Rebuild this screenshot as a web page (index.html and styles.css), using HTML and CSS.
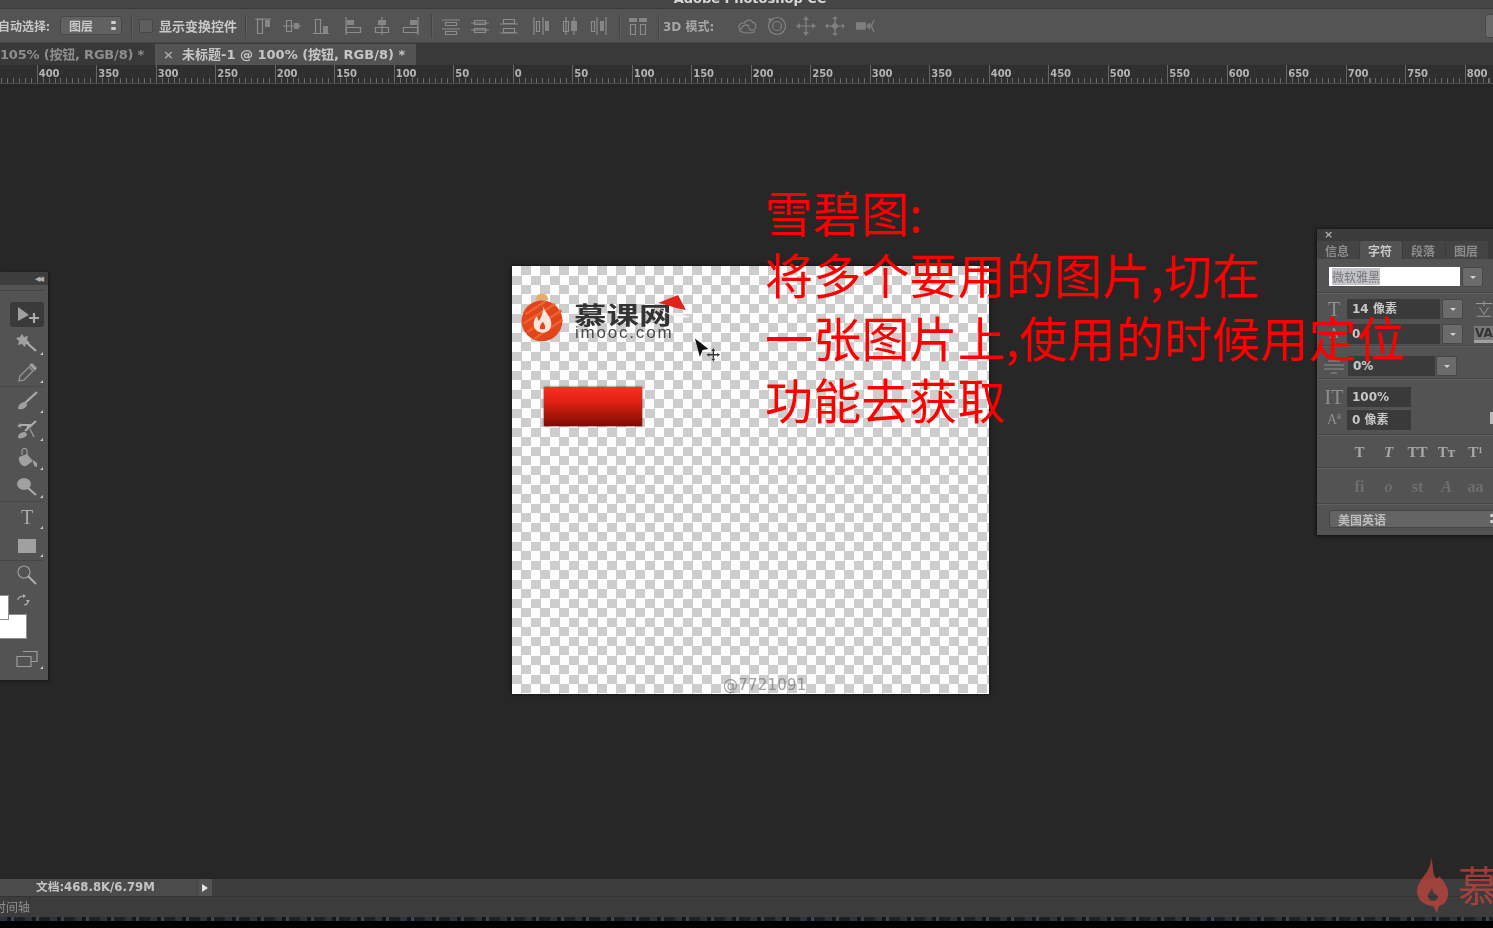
FILE: index.html
```html
<!DOCTYPE html>
<html lang="zh-CN">
<head>
    <meta charset="UTF-8">
    <title>Adobe Photoshop CC</title>
    <link rel="stylesheet" href="styles.css">
</head>
<body>
    <svg class="defs" width="0" height="0">
        <symbol id="al1" viewBox="0 0 20 20"><path d="M2 3h16M4.500 3.500h5v14h-5z"/><path class="f" d="M12 4h5v7h-5z"/></symbol>
        <symbol id="al2" viewBox="0 0 20 20"><path d="M1 10h18M4.500 4.500h5v11h-5z"/><path class="f" d="M12 7h5v6h-5z"/></symbol>
        <symbol id="al3" viewBox="0 0 20 20"><path d="M2 17.500h16M4.500 3.500h5v14h-5z"/><path class="f" d="M12 10h5v7h-5z"/></symbol>
        <symbol id="al4" viewBox="0 0 20 20"><path d="M3 1v18M3.500 11.500h14v5h-14z"/><path class="f" d="M4 4h7v5H4z"/></symbol>
        <symbol id="al5" viewBox="0 0 20 20"><path d="M10 1v18M3.500 11.500h13v5h-13z"/><path class="f" d="M6 4h8v5H6z"/></symbol>
        <symbol id="al6" viewBox="0 0 20 20"><path d="M17 1v18M2.500 11.500h14v5h-14z"/><path class="f" d="M9 4h7v5H9z"/></symbol>
        <symbol id="ds1" viewBox="0 0 20 20"><path d="M1 4h18M1 13h18M4.500 6.500h11v3h-11zM4.500 15.500h11v3h-11z"/></symbol>
        <symbol id="ds2" viewBox="0 0 20 20"><path d="M1 7h18M1 14h18M4.500 4.500h11v4h-11zM4.500 12.500h11v4h-11z"/></symbol>
        <symbol id="ds3" viewBox="0 0 20 20"><path d="M1 8h18M1 17h18M4.500 3.500h11v4h-11zM4.500 12.500h11v4h-11z"/></symbol>
        <symbol id="ds4" viewBox="0 0 20 20"><path d="M3 1v18M12 1v18M5.500 5.500h3v10h-3z"/><path class="f" d="M14 5h4v10h-4z"/></symbol>
        <symbol id="ds5" viewBox="0 0 20 20"><path d="M6 1v18M14 1v18M3.500 5.500h5v10h-5z"/><path class="f" d="M11 5h6v10h-6z"/></symbol>
        <symbol id="ds6" viewBox="0 0 20 20"><path d="M8 1v18M17 1v18M2.500 5.500h3v10h-3z"/><path class="f" d="M11 5h4v10h-4z"/></symbol>
        <symbol id="auto" viewBox="0 0 20 20"><path class="f" d="M1 2h8v4H1zM11 2h8v4h-8z"/><path d="M2.500 8.500h5v10h-5zM12.500 8.500h5v10h-5z"/></symbol>
        <symbol id="orbit" viewBox="0 0 22 20"><path d="M3 13c-3-4 2-7 5-6 1-4 8-5 9-1 4 0 5 6 2 8-3 2-6 0-6-3s-5-3-7 0c-1 2-2 3-3 2zM2 14c3 4 12 5 18 2"/></symbol>
        <symbol id="roll" viewBox="0 0 20 20"><circle cx="10" cy="10" r="8.500"/><circle cx="10" cy="10" r="4.500"/><path class="f" d="M1 2l6 1-4 4z"/></symbol>
        <symbol id="pan" viewBox="0 0 20 20"><path d="M10 2v16M2 10h16"/><path class="f" d="M10 0l3 4H7zM10 20l3-4H7zM0 10l4-3v6zM20 10l-4-3v6z"/></symbol>
        <symbol id="slide" viewBox="0 0 20 20"><path d="M1 10h18M10 3v14"/><path class="f" d="M10 6l4 4-4 4-4-4zM10 0l3 3H7zM10 20l3-3H7zM0 10l3-3v6zM20 10l-3-3v6z"/></symbol>
        <symbol id="cam" viewBox="0 0 22 20"><path class="f" d="M1 6h11v8H1zM13 9l4-3v8l-4-3z"/><path d="M21 3l-3 7 3 7"/></symbol>
    </svg>

    <div class="app">
        <div class="titlebar"><span>Adobe Photoshop CC</span></div>

        <div class="options">
            <span class="opt-label">自动选择:</span>
            <span class="opt-select">图层<i class="updown"></i></span>
            <span class="opt-sep s1"></span>
            <span class="opt-check"></span>
            <span class="opt-text">显示变换控件</span>
            <span class="opt-sep s2"></span>
            <div class="opt-icons first">
                <svg class="ico"><use href="#al1"/></svg>
                <svg class="ico"><use href="#al2"/></svg>
                <svg class="ico"><use href="#al3"/></svg>
            </div>
            <div class="opt-icons gap12">
                <svg class="ico"><use href="#al4"/></svg>
                <svg class="ico"><use href="#al5"/></svg>
                <svg class="ico"><use href="#al6"/></svg>
            </div>
            <span class="opt-sep s3"></span>
            <div class="opt-icons gap10">
                <svg class="ico"><use href="#ds1"/></svg>
                <svg class="ico"><use href="#ds2"/></svg>
                <svg class="ico"><use href="#ds3"/></svg>
            </div>
            <div class="opt-icons gap12">
                <svg class="ico"><use href="#ds4"/></svg>
                <svg class="ico"><use href="#ds5"/></svg>
                <svg class="ico"><use href="#ds6"/></svg>
            </div>
            <span class="opt-sep s3"></span>
            <div class="opt-icons gap9">
                <svg class="ico"><use href="#auto"/></svg>
            </div>
            <span class="opt-sep s4"></span>
            <span class="opt-3d">3D 模式:</span>
            <div class="opt-icons gap12 dim">
                <svg class="ico"><use href="#orbit"/></svg>
                <svg class="ico gap2"><use href="#roll"/></svg>
                <svg class="ico"><use href="#pan"/></svg>
                <svg class="ico"><use href="#slide"/></svg>
                <svg class="ico gap2"><use href="#cam"/></svg>
            </div>
            <span class="opt-end"></span>
        </div>

        <div class="tabs">
            <div class="tab">105% (按钮, RGB/8) *</div>
            <div class="tab active"><span class="close">×</span>未标题-1 @ 100% (按钮, RGB/8) *</div>
        </div>

        <div class="ruler">
            <div class="mark">400</div><div class="mark">350</div><div class="mark">300</div>
            <div class="mark">250</div><div class="mark">200</div><div class="mark">150</div>
            <div class="mark">100</div><div class="mark">50</div><div class="mark">0</div>
            <div class="mark">50</div><div class="mark">100</div><div class="mark">150</div>
            <div class="mark">200</div><div class="mark">250</div><div class="mark">300</div>
            <div class="mark">350</div><div class="mark">400</div><div class="mark">450</div>
            <div class="mark">500</div><div class="mark">550</div><div class="mark">600</div>
            <div class="mark">650</div><div class="mark">700</div><div class="mark">750</div>
            <div class="mark">800</div>
        </div>

        <main class="workspace">
            <!-- the open document -->
            <div class="doc">
                <svg class="ball" viewBox="0 0 48 56">
                    <path d="M17 9c1-5 3-7 7-7s6 2 7 7z" fill="#e0b06a"/>
                    <circle cx="24" cy="31" r="22" fill="#e2451c"/>
                    <path d="M6 24l22-14M4 34L38 13M8 43L45 20M16 50l30-20" stroke="#ee6430" stroke-width="2.500"/>
                    <path d="M25 15c2 7 9 11 9 19 0 6-4 10-9 10-6 0-10-4-10-10 0-4 2-7 4-8 0 3 1 4 2 5 2-5 5-9 4-16z" fill="#fbe6dc"/>
                    <path d="M25 32c2 3 3 5 2 8h-5c-1-3 1-6 3-8z" fill="#e2451c"/>
                </svg>
                <span class="brand">慕课网</span>
                <span class="brand-sub">imooc.com</span>
                <svg class="hat" viewBox="0 0 36 26">
                    <path d="M2 16l10 5 13 1 10 3-9 1C17 24 8 21 2 16z" fill="#f4f4f4"/>
                    <path d="M2 11L22 3l8 15-10-2C14 14 8 12 2 11z" fill="#e3241b"/>
                </svg>
                <div class="red-bar"></div>
                <svg class="pointer" viewBox="0 0 28 26">
                    <path d="M1 1l14 11-6 1-3 7z" fill="#111"/>
                    <path d="M20 14v8M16 18h8" stroke="#333" stroke-width="1.500"/>
                    <path d="M20 11l2 3h-4zM20 25l2-3h-4zM13 18l3-2v4zM27 18l-3-2v4z" fill="#333"/>
                </svg>
                <span class="watermark">@7721091</span>
            </div>

            <!-- tool strip -->
            <aside class="tools">
                <div class="tools-head">◂◂</div>
                <div class="tools-grip"></div>
                <div class="tool on">
                    <svg viewBox="0 0 26 20"><path class="f" d="M4 2l11 8-11 6z"/><path class="w" d="M20 8v10M15 13h10"/></svg>
                </div>
                <div class="tool mark-c">
                    <svg viewBox="0 0 26 20"><path class="f" d="M8 1l2 3 4-1-1 4 3 3-4 1-1 3-3-3-4 1 1-4-3-3 4-1z"/><path class="w" d="M12 9l10 9"/></svg>
                </div>
                <div class="tool mark-c">
                    <svg viewBox="0 0 26 20"><path d="M5 19l1-5 9-9 4 4-9 9z"/><path class="f" d="M15 3l3-2 5 5-2 3z"/></svg>
                </div>
                <div class="tool-line"></div>
                <div class="tool mark-c">
                    <svg viewBox="0 0 26 20"><path class="w" d="M11 12L23 1"/><path class="f" d="M4 18c0-4 3-7 7-7l2 2c0 4-5 6-9 5z"/></svg>
                </div>
                <div class="tool mark-c">
                    <svg viewBox="0 0 26 20"><path class="w" d="M11 11L22 1M5 5h11l-3 3"/><path class="f" d="M4 18c0-4 3-6 7-6l2 2c0 3-5 5-9 4zM3 6l4-3v5z"/><path d="M16 9l4 8"/></svg>
                </div>
                <div class="tool mark-c">
                    <svg viewBox="0 0 26 20"><path class="f" d="M5 9l8-3 6 7-7 5c-4 1-8-4-7-9z"/><path d="M8 7V3a2.500 2.500 0 0 1 5 0v5"/><path class="f" d="M19 12l4 3v4c-3 0-4-3-4-7z"/></svg>
                </div>
                <div class="tool mark-c">
                    <svg viewBox="0 0 26 20"><ellipse class="f" cx="10" cy="7" rx="7" ry="6"/><path class="w" d="M14 11l8 7"/></svg>
                </div>
                <div class="tool-line"></div>
                <div class="tool mark-c tall">
                    <span class="tool-t">T</span>
                </div>
                <div class="tool mark-c">
                    <svg viewBox="0 0 26 20"><rect class="f" x="4" y="3" width="18" height="14"/></svg>
                </div>
                <div class="tool-line"></div>
                <div class="tool">
                    <svg viewBox="0 0 26 20"><circle cx="10" cy="7" r="6"/><path class="w" d="M14 11l8 8"/></svg>
                </div>
                <div class="colors">
                    <svg class="swap" viewBox="0 0 14 12"><path d="M2 6c0-3 3-4 6-4M8 11c3 0 4-2 4-5"/><path class="f" d="M7 0l3 2-3 2zM10 6h4l-2 3z"/></svg>
                    <div class="swatch bg"></div>
                    <div class="swatch fg"></div>
                </div>
                <div class="tool mark-c">
                    <svg viewBox="0 0 26 20"><path d="M3 8.500h14v10H3zM9 3.500h14v10H17"/></svg>
                </div>
            </aside>

            <!-- character panel -->
            <aside class="panel">
                <div class="panel-head">×</div>
                <div class="panel-tabs">
                    <span class="ptab">信息</span>
                    <span class="ptab on">字符</span>
                    <span class="ptab">段落</span>
                    <span class="ptab">图层</span>
                </div>
                <div class="p-section font-row">
                    <div class="font-input"><span>微软雅黑</span></div>
                    <span class="drop"></span>
                </div>
                <div class="p-section size-rows">
                    <div class="p-row">
                        <span class="p-ico">T</span>
                        <span class="field w-93">14 像素</span>
                        <span class="drop"></span>
                        <svg class="p-side" viewBox="0 0 22 20"><path d="M2 4h18M11 1v6M6 8l5 8 5-8M3 18h16"/></svg>
                    </div>
                    <div class="p-row">
                        <span class="p-ico small">A</span>
                        <span class="field w-93">0</span>
                        <span class="drop"></span>
                        <span class="p-va">VA</span>
                    </div>
                </div>
                <div class="p-section pct-row">
                    <div class="p-row">
                        <svg class="p-small" viewBox="0 0 22 18"><path d="M1 8h20M1 12h20M5 4h12M8 16h6"/></svg>
                        <span class="field w-87">0%</span>
                        <span class="drop"></span>
                    </div>
                </div>
                <div class="p-section scale-rows">
                    <div class="p-row">
                        <span class="p-ico">IT</span>
                        <span class="field w-64">100%</span>
                    </div>
                    <div class="p-row">
                        <span class="p-ico small">Aª</span>
                        <span class="field w-64">0 像素</span>
                        <span class="p-tail"></span>
                    </div>
                </div>
                <div class="p-section style-row">
                    <span>T</span><span class="it">T</span><span>TT</span><span>Tт</span><span>T¹</span>
                </div>
                <div class="p-section liga-row">
                    <span>fi</span><span class="it">o</span><span>st</span><span class="it">A</span><span>aa</span>
                </div>
                <div class="p-section lang-row">
                    <div class="lang">美国英语<i class="updown"></i></div>
                </div>
            </aside>

            <div class="note">雪碧图:<br>将多个要用的图片,切在<br>一张图片上,使用的时候用定位<br>功能去获取</div>
        </main>

        <div class="status">
            <div class="status-info">文档:468.8K/6.79M<span class="status-btn"></span></div>
        </div>
        <div class="timeline"><span>时间轴</span></div>
        <div class="noise"></div>

        <div class="site-mark">
            <svg viewBox="0 0 32 55"><path fill-rule="evenodd" d="M14 0c3 9 1 14 4 19 2 3 4 0 4-1 6 6 10 13 9 20-1 6-5 9-9 10l-2 7-4-7C7 47 1 43 0 34 0 24 8 18 11 12c2-4 3-8 3-12zM15 30c-2 4-5 6-4 9 1 3 3 4 5 4s5-2 5-4c0-3-3-2-4-4-1-1-1-3-2-5z"/></svg>
            <span>慕</span>
        </div>
    </div>
</body>
</html>
```

FILE: styles.css
```css
* {
    box-sizing: border-box;
}

body {
    margin: 0;
    background-color: #262626;
    font-family: "DejaVu Sans", "Noto Sans CJK SC", sans-serif;
    overflow: hidden;
}

.defs {
    position: absolute;
}

.app {
    position: relative;
    width: 1493px;
    height: 928px;
    display: flex;
    flex-direction: column;
    overflow: hidden;
}

/* top of the window */
.titlebar {
    height: 9px;
    flex: none;
    display: flex;
    justify-content: center;
    align-items: flex-end;
    padding: 0 0 2px 7px;
    background-color: #454545;
    border-bottom: 1px solid #3a3a3a;
    overflow: hidden;
    filter: blur(.6px);
}

.titlebar span {
    font-size: 13px;
    line-height: 14px;
    font-weight: bold;
    color: #d8d8d8;
    white-space: nowrap;
}

.options {
    height: 34px;
    flex: none;
    display: flex;
    align-items: center;
    background-color: #545454;
    border-bottom: 1px solid #444;
    color: #c8c8c8;
    font-size: 12px;
    font-weight: bold;
    white-space: nowrap;
    filter: blur(.6px);
}

.opt-label {
    width: 60px;
    margin-left: -2px;
    font-family: "Noto Sans CJK SC", sans-serif;
    font-size: 12px;
    flex: none;
}

.opt-select {
    width: 62px;
    height: 19px;
    margin-left: 2px;
    padding-left: 8px;
    line-height: 18px;
    font-family: "Noto Sans CJK SC", sans-serif;
    background-color: #616161;
    border: 1px solid #474747;
    border-radius: 3px;
    position: relative;
    flex: none;
}

.updown {
    position: absolute;
    right: 5px;
    top: 50%;
    width: 5px;
    height: 9px;
    margin-top: -5px;
    border-top: 3px solid #ccc;
    border-bottom: 3px solid #ccc;
    transform: scaleX(.9);
}

.opt-sep {
    width: 1px;
    height: 24px;
    flex: none;
    background-color: #454545;
    box-shadow: 1px 0 0 #5e5e5e;
}

.s1 { margin-left: 9px; }
.s2 { margin-left: 8px; }
.s3 { margin-left: 10px; }
.s4 { margin-left: 10px; }

.opt-check {
    width: 14px;
    height: 14px;
    margin-left: 7px;
    background-color: #5e5e5e;
    border: 1px solid #484848;
    border-radius: 2px;
    flex: none;
}

.opt-text {
    width: 78px;
    margin-left: 6px;
    font-family: "Noto Sans CJK SC", sans-serif;
    font-size: 13px;
    flex: none;
}

.opt-icons {
    display: flex;
    gap: 9px;
    flex: none;
}

.opt-icons.first { margin-left: 7px; }
.opt-icons.gap12 { margin-left: 12px; }
.opt-icons.gap10 { margin-left: 9px; }
.opt-icons.gap9 { margin-left: 8px; }
.opt-icons.dim { opacity: .85; }

.ico {
    width: 20px;
    height: 20px;
    flex: none;
    fill: none;
    stroke: #8c8c8c;
    stroke-width: 1.200;
}

.ico.gap2 { margin-left: 1px; }

.f {
    fill: #868686;
    stroke: none;
}

.opt-3d {
    width: 62px;
    margin-left: 4px;
    color: #a6a6a6;
    font-size: 12px;
    flex: none;
}

.opt-end {
    margin-left: auto;
    margin-right: -6px;
    width: 14px;
    height: 24px;
    background-color: #696969;
    border: 1px solid #484848;
    border-radius: 3px;
}

.tabs {
    height: 22px;
    flex: none;
    display: flex;
    align-items: flex-end;
    background-color: #393939;
    font-size: 13px;
    color: #8d8d8d;
    white-space: nowrap;
    filter: blur(.7px);
}

.tab {
    width: 155px;
    height: 21px;
    line-height: 22px;
    font-weight: bold;
    letter-spacing: -.2px;
    overflow: hidden;
}

.tab.active {
    width: 261px;
    background-color: #535353;
    color: #c6c6c6;
    letter-spacing: 0;
}

.tab .close {
    width: 27px;
    display: inline-block;
    text-align: center;
    color: #a8a8a8;
}

.ruler {
    height: 19px;
    flex: none;
    display: flex;
    padding-left: 36.700px;
    background-color: #2f2f2f;
    background-image: repeating-linear-gradient(90deg, #6a6a6a 0 1px, transparent 1px 5.950px);
    background-size: 100% 5px;
    background-position: .700px 13px;
    background-repeat: no-repeat;
    border-bottom: 1px solid #4a4a4a;
    filter: blur(.7px);
    overflow: hidden;
}

.mark {
    width: 59.500px;
    flex: none;
    padding: 2px 0 0 1px;
    font-size: 10px;
    line-height: 14px;
    font-weight: bold;
    color: #b4b4b4;
    border-left: 1px solid #666;
}

.workspace {
    position: relative;
    flex: 1;
    background-color: #272727;
}

/* document on the canvas */
.doc {
    position: absolute;
    left: 512px;
    top: 182px;
    width: 477px;
    height: 428px;
    background-color: #fff;
    background-image: conic-gradient(#cdcdcd 25%, #fdfdfd 0 50%, #cdcdcd 0 75%, #fdfdfd 0);
    background-size: 19px 19px;
    box-shadow: 0 0 5px #111;
    filter: blur(.55px);
    overflow: hidden;
}

.ball {
    position: absolute;
    left: 7px;
    top: 26px;
    width: 46px;
    height: 52px;
}

.brand {
    position: absolute;
    left: 62px;
    top: 36px;
    font-family: "Noto Sans CJK SC", sans-serif;
    font-size: 32.500px;
    line-height: 34px;
    font-weight: bold;
    color: #333;
    white-space: nowrap;
    transform: scaleY(.72);
    transform-origin: top left;
}

.brand-sub {
    position: absolute;
    left: 63px;
    top: 59px;
    font-family: "Liberation Sans", sans-serif;
    font-size: 17px;
    line-height: 16px;
    letter-spacing: 1.800px;
    color: #4a4a4a;
    white-space: nowrap;
}

.hat {
    position: absolute;
    left: 144px;
    top: 26px;
    width: 36px;
    height: 26px;
}

.red-bar {
    position: absolute;
    left: 32px;
    top: 121px;
    width: 98px;
    height: 39px;
    background-image: linear-gradient(#f9301c, #e42214 35%, #7d0c04);
    box-shadow: 0 0 2px #611;
}

.pointer {
    position: absolute;
    left: 182px;
    top: 71px;
    width: 27px;
    height: 26px;
}

.watermark {
    position: absolute;
    left: 211px;
    top: 409px;
    font-size: 15px;
    line-height: 20px;
    letter-spacing: .2px;
    color: rgba(110, 110, 110, .65);
    white-space: nowrap;
}

/* tool strip on the left */
.tools {
    position: absolute;
    left: 0;
    top: 188px;
    width: 48px;
    height: 408px;
    padding-right: 4px;
    background-color: #535353;
    box-shadow: 1px 1px 3px #151515;
    filter: blur(.7px);
    display: flex;
    flex-direction: column;
    align-items: flex-end;
}

.tools-head {
    width: 48px;
    height: 13px;
    margin-right: -4px;
    padding-right: 6px;
    background-color: #3d3d3d;
    color: #b0b0b0;
    font-size: 11px;
    line-height: 13px;
    letter-spacing: -2px;
    text-align: right;
}

.tools-grip {
    width: 100%;
    height: 1px;
    margin: 5px 0 11px;
    background-color: #434343;
}

.tool {
    width: 34px;
    height: 28.500px;
    display: flex;
    align-items: center;
    justify-content: center;
    flex: none;
    position: relative;
}

.tool svg {
    width: 26px;
    height: 20px;
    fill: none;
    stroke: #9c9c9c;
    stroke-width: 1.200;
}

.tool svg .f { fill: #a0a0a0; stroke: none; }
.tool svg .w { stroke-width: 2.200; stroke: #acacac; }

.tool.on {
    height: 25px;
    background-color: #3a3a3a;
    border-radius: 3px;
    margin-bottom: 2px;
}

.tool.mark-c::after {
    content: "";
    position: absolute;
    right: 1px;
    bottom: 3px;
    border-left: 3px solid transparent;
    border-bottom: 3px solid #c8c8c8;
}

.tool-t {
    font-family: "Liberation Serif", serif;
    font-size: 20px;
    color: #ababab;
}

.tool.tall { margin-top: 1px; }

.tool-line {
    width: 100%;
    height: 1px;
    background-color: #474747;
    flex: none;
}

.colors {
    position: relative;
    width: 44px;
    height: 54px;
    flex: none;
}

.swatch {
    position: absolute;
    background-color: #fff;
    border: 1px solid #8f8f8f;
}

.swatch.bg {
    left: -2px;
    top: 24px;
    width: 29px;
    height: 25px;
}

.swatch.fg {
    left: -2px;
    top: 5px;
    width: 11px;
    height: 25px;
}

.swap {
    position: absolute;
    left: 16px;
    top: 4px;
    width: 14px;
    height: 12px;
    fill: none;
    stroke: #b0b0b0;
    stroke-width: 1.200;
}

.swap .f { fill: #b0b0b0; stroke: none; }

/* character panel on the right */
.panel {
    position: absolute;
    left: 1317px;
    top: 145px;
    width: 190px;
    height: 306px;
    background-color: #535353;
    box-shadow: -1px 0 3px #151515, 0 1px 3px #151515;
    filter: blur(.7px);
    color: #c0c0c0;
    font-size: 12px;
    font-weight: bold;
}

.panel-head {
    height: 12px;
    padding-left: 7px;
    background-color: #3b3b3b;
    font-size: 11px;
    line-height: 12px;
    color: #b0b0b0;
}

.panel-tabs {
    height: 18px;
    display: flex;
    align-items: stretch;
    background-color: #3b3b3b;
    font-family: "Noto Sans CJK SC", sans-serif;
}

.ptab {
    width: 42px;
    margin-right: 1px;
    padding-left: 8px;
    line-height: 19px;
    color: #8c8c8c;
    background-color: #444;
}

.ptab.on {
    color: #c8c8c8;
    background-color: #535353;
    border-radius: 2px 2px 0 0;
}

.p-section {
    border-bottom: 1px solid #454545;
    box-shadow: 0 1px 0 #5f5f5f;
}

.font-row {
    height: 34px;
    display: flex;
    align-items: flex-start;
    gap: 2px;
    padding: 8px 0 0 12px;
}

.font-input {
    width: 131px;
    height: 19px;
    background-color: #fff;
    padding: 1px 0 0 3px;
    font-family: "Noto Sans CJK SC", sans-serif;
    font-weight: normal;
    line-height: 17px;
    color: #777;
}

.font-input span {
    background-color: #c2c4ca;
}

.drop {
    width: 21px;
    height: 20px;
    flex: none;
    position: relative;
    background-color: #6b6b6b;
    border: 1px solid #464646;
    border-radius: 2px;
}

.drop::after {
    content: "";
    position: absolute;
    left: 7px;
    top: 8px;
    border-left: 3px solid transparent;
    border-right: 3px solid transparent;
    border-top: 3px solid #d0d0d0;
}

.p-row {
    display: flex;
    align-items: center;
    gap: 2px;
    padding-left: 6px;
    position: relative;
}

.size-rows {
    height: 53px;
    padding-top: 6px;
}

.size-rows .p-row { height: 20px; margin-bottom: 5px; }

.pct-row {
    height: 33px;
    padding-top: 10px;
}

.pct-row .p-row { height: 20px; gap: 1px; }

.scale-rows {
    height: 56px;
    padding-top: 7px;
}

.scale-rows .p-row { height: 21px; margin-bottom: 2px; }

.p-ico {
    width: 22px;
    font-family: "Liberation Serif", serif;
    font-size: 20px;
    line-height: 20px;
    font-weight: normal;
    color: #8f8f8f;
    text-align: center;
    flex: none;
}

.p-ico.small {
    font-size: 14px;
}

.p-small {
    width: 22px;
    height: 18px;
    margin-right: 2px;
    fill: none;
    stroke: #8f8f8f;
    flex: none;
}

.field {
    height: 20px;
    padding-left: 5px;
    line-height: 21px;
    background-color: #3a3a3a;
    color: #c8c8c8;
    flex: none;
    white-space: nowrap;
}

.w-93 { width: 93px; }
.w-87 { width: 87px; }
.w-64 { width: 64px; }

.p-side {
    width: 20px;
    height: 20px;
    margin-left: 9px;
    fill: none;
    stroke: #a0a0a0;
    flex: none;
}

.p-va {
    margin-left: 9px;
    width: 22px;
    padding-left: 1px;
    background-color: #777;
    color: #333;
    font-size: 12px;
    line-height: 14px;
    border-bottom: 3px solid #a0a0a0;
    flex: none;
}

.p-tail {
    position: absolute;
    left: 173px;
    top: 3px;
    width: 3px;
    height: 12px;
    background-color: #bbb;
}

.style-row,
.liga-row {
    display: flex;
    align-items: center;
    padding: 3px 0 0 29px;
    font-family: "Liberation Serif", serif;
    font-size: 15px;
    color: #a8a8a8;
}

.style-row { height: 33px; }
.liga-row { height: 36px; color: #6f6f6f; font-size: 16px; }

.style-row span,
.liga-row span {
    width: 29px;
    text-align: center;
    flex: none;
    margin-left: -1px;
    margin-right: 1px;
}

.it {
    font-style: italic;
}

.lang-row {
    border: 0;
    box-shadow: none;
    padding: 6px 0 0 12px;
}

.lang {
    position: relative;
    width: 180px;
    height: 18px;
    padding-left: 8px;
    line-height: 17px;
    font-family: "Noto Sans CJK SC", sans-serif;
    color: #bdbdbd;
    background-color: #646464;
    border: 1px solid #454545;
    border-radius: 3px;
}

.lang .updown {
    right: 13px;
}

/* the lesson note typed over the video */
.note {
    position: absolute;
    left: 765px;
    top: 96px;
    font-family: "Noto Sans CJK SC", sans-serif;
    font-size: 48px;
    letter-spacing: .2px;
    line-height: 62.300px;
    color: #f00;
    white-space: nowrap;
}

/* bottom bars */
.status {
    height: 17px;
    flex: none;
    background-color: #3d3d3d;
    filter: blur(.7px);
}

.status-info {
    width: 212px;
    height: 17px;
    padding-left: 36px;
    position: relative;
    background-color: #4b4b4b;
    font-size: 11.700px;
    font-weight: bold;
    line-height: 17px;
    color: #c4c4c4;
    white-space: nowrap;
}

.status-btn {
    position: absolute;
    right: 0;
    top: 0;
    width: 13px;
    height: 17px;
    background-color: #535353;
}

.status-btn::after {
    content: "";
    position: absolute;
    left: 3px;
    top: 5px;
    border-left: 6px solid #e4e4e4;
    border-top: 4px solid transparent;
    border-bottom: 4px solid transparent;
}

.timeline {
    height: 21px;
    flex: none;
    background-color: #3c3c3c;
    border-top: 1px solid #333;
    overflow: hidden;
    filter: blur(.7px);
}

.timeline span {
    display: block;
    width: 36px;
    height: 20px;
    margin-left: -6px;
    border-right: 1px solid #333;
    font-family: "Noto Sans CJK SC", sans-serif;
    font-size: 12px;
    line-height: 20px;
    color: #8f8f8f;
    white-space: nowrap;
}

.noise {
    height: 11px;
    flex: none;
    background-color: #000;
    background-image: repeating-linear-gradient(90deg, #2a3540 0 7px, #12161c 7px 11px, #3a4650 11px 14px, #1a2026 14px 25px);
    background-size: 100% 4px;
    background-repeat: no-repeat;
    filter: blur(.5px);
}

.site-mark {
    position: absolute;
    left: 1417px;
    top: 858px;
    display: flex;
    align-items: center;
    gap: 9px;
    opacity: .72;
    color: #c9453c;
    filter: blur(.6px);
}

.site-mark svg {
    width: 32px;
    height: 55px;
    fill: #c9453c;
    flex: none;
}

.site-mark span {
    font-family: "Noto Sans CJK SC", sans-serif;
    font-size: 42px;
    line-height: 50px;
    margin-bottom: 4px;
}
```
